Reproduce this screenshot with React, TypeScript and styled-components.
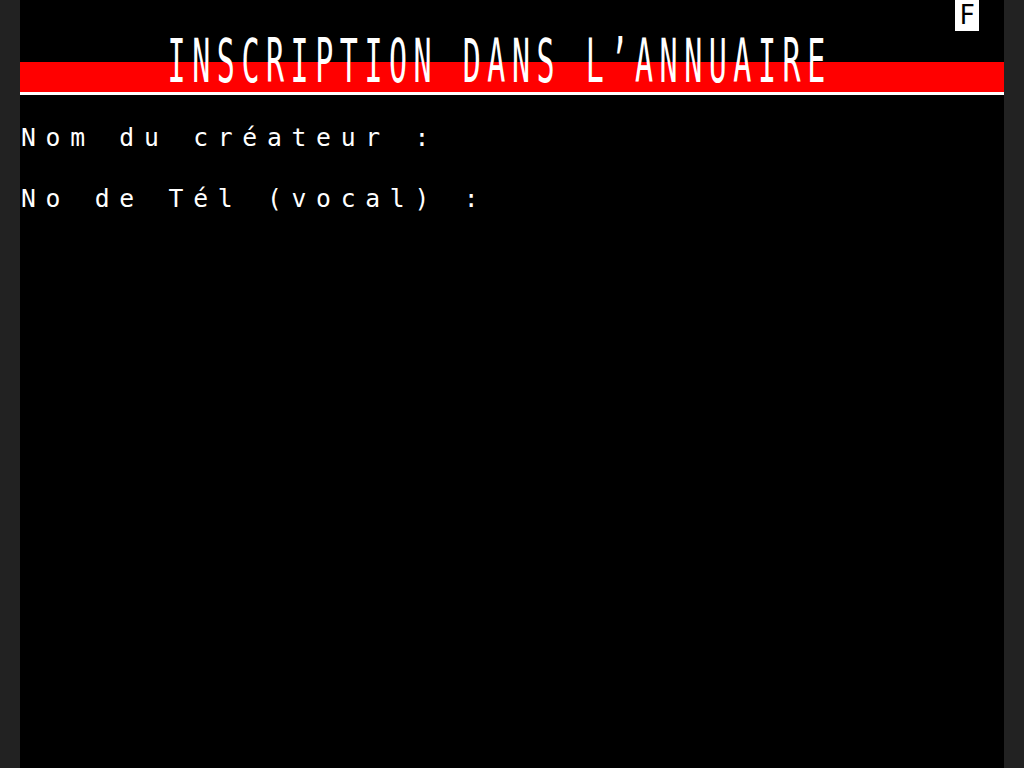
import React from "react";
import styled, { createGlobalStyle } from "styled-components";

const CELL_W = 24.6;
const ROW_H = 30.72;

const GlobalStyle = createGlobalStyle`
  html, body {
    margin: 0;
    padding: 0;
    background: #222222;
    height: 100%;
    overflow: hidden;
  }
  #root {
    height: 100%;
  }
`;

const Page = styled.div`
  display: flex;
  justify-content: center;
  height: 768px;
  width: 1024px;
  background: #222222;
`;

const Screen = styled.div`
  width: ${CELL_W * 40}px;
  height: 768px;
  background: #000000;
  display: flex;
  flex-direction: column;
  font-family: "DejaVu Sans Mono", "Liberation Mono", monospace;
  color: #ffffff;
`;

const StatusRow = styled.div`
  height: ${ROW_H}px;
  display: flex;
  justify-content: flex-end;
  padding-right: ${CELL_W}px;
`;

const StatusBox = styled.div`
  width: ${CELL_W}px;
  height: ${ROW_H}px;
  background: #ffffff;
  color: #000000;
  font-size: 26px;
  line-height: ${ROW_H}px;
  text-align: center;
`;

const TitleBand = styled.div`
  height: ${ROW_H * 2}px;
  background: linear-gradient(
    to bottom,
    #000000 0,
    #000000 ${ROW_H}px,
    #ff0000 ${ROW_H}px,
    #ff0000 100%
  );
  padding-left: ${CELL_W * 6}px;
  box-sizing: border-box;
`;

const TitleText = styled.span`
  display: block;
  font-size: 30px;
  line-height: ${ROW_H}px;
  letter-spacing: ${CELL_W - 30 * 0.6021}px;
  white-space: pre;
  transform: translateY(1px) scaleY(2);
  transform-origin: top left;
`;

const Rule = styled.div`
  height: 3px;
  background: #ffffff;
`;

const Row = styled.div<{ $gap?: number }>`
  height: ${ROW_H}px;
  margin-top: ${(p) => p.$gap ?? 0}px;
`;

const Label = styled.span`
  display: block;
  font-size: 24.7px;
  line-height: ${ROW_H}px;
  letter-spacing: ${CELL_W - 24.7 * 0.6021}px;
  white-space: pre;
  padding-left: 1px;
`;

export default function App() {
  return (
    <>
      <GlobalStyle />
      <Page>
        <Screen>
          <StatusRow>
            <StatusBox>F</StatusBox>
          </StatusRow>
          <TitleBand>
            <TitleText>INSCRIPTION DANS L’ANNUAIRE</TitleText>
          </TitleBand>
          <Rule />
          <Row $gap={ROW_H - 3}>
            <Label>Nom du créateur :</Label>
          </Row>
          <Row $gap={ROW_H}>
            <Label>No de Tél (vocal) :</Label>
          </Row>
        </Screen>
      </Page>
    </>
  );
}
